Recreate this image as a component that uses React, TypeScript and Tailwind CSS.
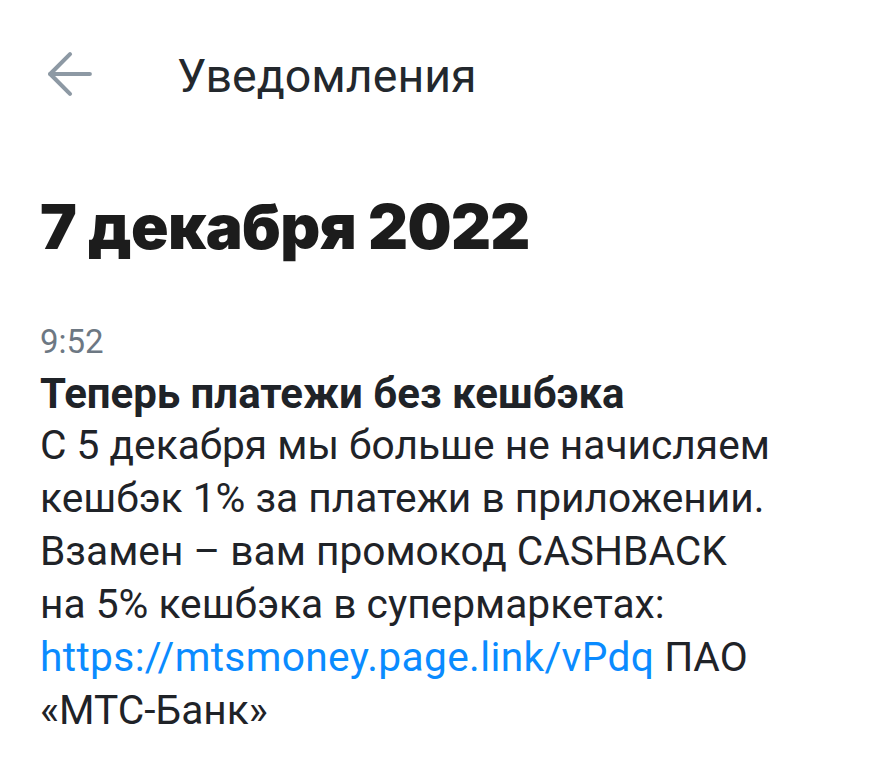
import { ArrowLeft } from "lucide-react";

export default function App() {
  return (
    <div className="min-h-screen w-[877px] bg-white font-['Roboto',sans-serif] text-[#1f2328]">
      {/* Header */}
      <header className="flex items-start pl-[36px] pt-[40px]">
        <ArrowLeft size={68} strokeWidth={1.45} className="text-[#8d99a4]" />
        <h1 className="ml-[73px] mt-[1.5px] text-[46.5px] leading-[68px] text-[#23282d]">Уведомления</h1>
      </header>

      {/* Day */}
      <section className="px-[40px]">
        <h2 className="mt-[86px] font-['Inter',sans-serif] text-[62px] font-black leading-none tracking-[-0.6px] text-[#1c1c1c]">
          7 декабря 2022
        </h2>

        <div className="mt-[67.6px]">
          <div className="text-[33px] leading-none text-[#6d7883]">9:52</div>
          <h3 className="mt-[14.6px] text-[42px] font-bold leading-none">Теперь платежи без кешбэка</h3>
          <p className="mt-[4px] text-[40.7px] leading-[53px]">
            С 5 декабря мы больше не начисляем
            <br />
            кешбэк 1% за платежи в приложении.
            <br />
            Взамен – вам промокод CASHBACK
            <br />
            на 5% кешбэка в супермаркетах:
            <br />
            <a href="#" className="tracking-[0.35px] text-[#0a8bff]">https://mtsmoney.page.link/vPdq</a> ПАО
            <br />
            «МТС-Банк»
          </p>
        </div>
      </section>
    </div>
  );
}
